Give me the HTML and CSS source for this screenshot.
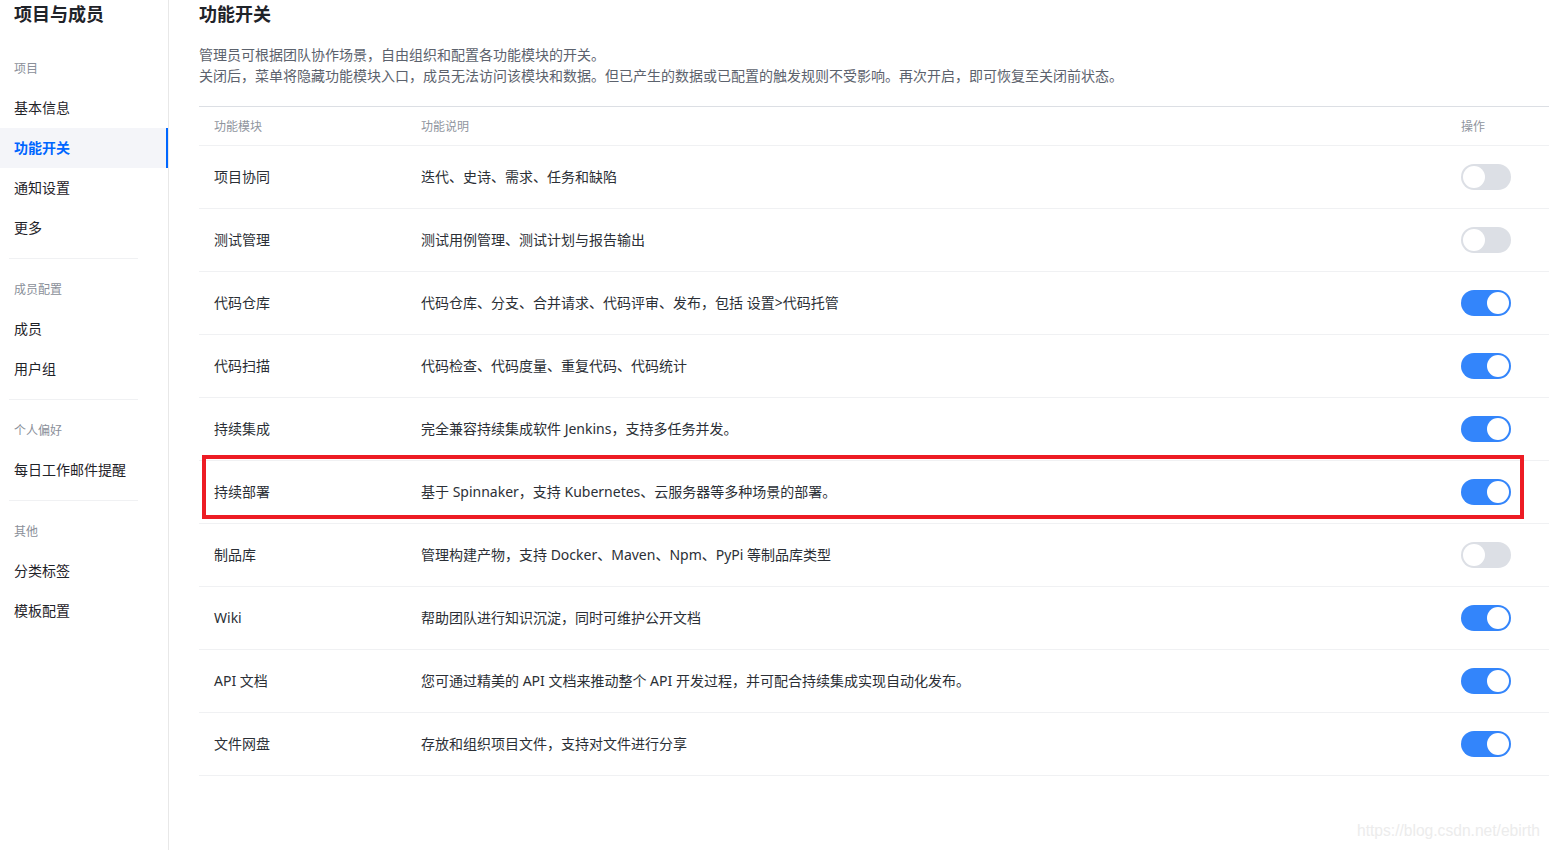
FILE: index.html
```html
<!DOCTYPE html>
<html lang="zh-CN">
<head>
<meta charset="utf-8">
<title>功能开关</title>
<link rel="stylesheet" href="styles.css">
</head>
<body>
<div class="layout">
  <aside class="sidebar">
    <h1 class="side-title">项目与成员</h1>
    <div class="group">
      <div class="group-label">项目</div>
      <a class="nav-item">基本信息</a>
      <a class="nav-item active">功能开关</a>
      <a class="nav-item">通知设置</a>
      <a class="nav-item">更多</a>
    </div>
    <div class="divider"></div>
    <div class="group">
      <div class="group-label">成员配置</div>
      <a class="nav-item">成员</a>
      <a class="nav-item">用户组</a>
    </div>
    <div class="divider"></div>
    <div class="group">
      <div class="group-label">个人偏好</div>
      <a class="nav-item">每日工作邮件提醒</a>
    </div>
    <div class="divider"></div>
    <div class="group">
      <div class="group-label">其他</div>
      <a class="nav-item">分类标签</a>
      <a class="nav-item">模板配置</a>
    </div>
  </aside>

  <main class="main">
    <h2 class="page-title">功能开关</h2>
    <p class="desc">管理员可根据团队协作场景，自由组织和配置各功能模块的开关。<br>关闭后，菜单将隐藏功能模块入口，成员无法访问该模块和数据。但已产生的数据或已配置的触发规则不受影响。再次开启，即可恢复至关闭前状态。</p>

    <div class="table">
      <div class="row head">
        <div class="cell">功能模块</div>
        <div class="cell">功能说明</div>
        <div class="cell">操作</div>
      </div>
      <div class="row">
        <div class="cell">项目协同</div>
        <div class="cell">迭代、史诗、需求、任务和缺陷</div>
        <div class="cell"><span class="switch"></span></div>
      </div>
      <div class="row">
        <div class="cell">测试管理</div>
        <div class="cell">测试用例管理、测试计划与报告输出</div>
        <div class="cell"><span class="switch"></span></div>
      </div>
      <div class="row">
        <div class="cell">代码仓库</div>
        <div class="cell">代码仓库、分支、合并请求、代码评审、发布，包括 设置&gt;代码托管</div>
        <div class="cell"><span class="switch on"></span></div>
      </div>
      <div class="row">
        <div class="cell">代码扫描</div>
        <div class="cell">代码检查、代码度量、重复代码、代码统计</div>
        <div class="cell"><span class="switch on"></span></div>
      </div>
      <div class="row">
        <div class="cell">持续集成</div>
        <div class="cell">完全兼容持续集成软件 Jenkins，支持多任务并发。</div>
        <div class="cell"><span class="switch on"></span></div>
      </div>
      <div class="row">
        <div class="cell">持续部署</div>
        <div class="cell">基于 Spinnaker，支持 Kubernetes、云服务器等多种场景的部署。</div>
        <div class="cell"><span class="switch on"></span></div>
      </div>
      <div class="row">
        <div class="cell">制品库</div>
        <div class="cell">管理构建产物，支持 Docker、Maven、Npm、PyPi 等制品库类型</div>
        <div class="cell"><span class="switch"></span></div>
      </div>
      <div class="row">
        <div class="cell">Wiki</div>
        <div class="cell">帮助团队进行知识沉淀，同时可维护公开文档</div>
        <div class="cell"><span class="switch on"></span></div>
      </div>
      <div class="row">
        <div class="cell">API 文档</div>
        <div class="cell">您可通过精美的 API 文档来推动整个 API 开发过程，并可配合持续集成实现自动化发布。</div>
        <div class="cell"><span class="switch on"></span></div>
      </div>
      <div class="row">
        <div class="cell">文件网盘</div>
        <div class="cell">存放和组织项目文件，支持对文件进行分享</div>
        <div class="cell"><span class="switch on"></span></div>
      </div>
    </div>
  </main>
</div>
<div class="highlight"></div>
<div class="watermark">https://blog.csdn.net/ebirth</div>
</body>
</html>
```

FILE: styles.css
```css
* { box-sizing: border-box; }
html, body {
  margin: 0;
  padding: 0;
  background: #fff;
}
body {
  font-family: "Noto Sans", "Noto Sans CJK SC", sans-serif;
  color: #1f2329;
  width: 1549px;
  height: 850px;
  overflow: hidden;
  position: relative;
}
.layout {
  display: flex;
  height: 850px;
}
.sidebar {
  width: 169px;
  flex: none;
  border-right: 1px solid #e8e8e8;
}
.side-title {
  margin: 0 0 20px 0;
  padding-left: 14px;
  font-size: 18px;
  line-height: 28px;
  font-weight: 700;
  color: #1f2329;
}
.group { display: flex; flex-direction: column; }
.group-label {
  height: 40px;
  line-height: 42px;
  padding-left: 14px;
  font-size: 12px;
  color: #8a8f99;
}
.nav-item {
  display: block;
  height: 40px;
  line-height: 40px;
  padding-left: 14px;
  font-size: 14px;
  color: #1f2329;
}
.nav-item.active {
  background: #f4f5f9;
  color: #0066ff;
  font-weight: 700;
  border-right: 2px solid #0066ff;
}
.divider {
  height: 1px;
  margin: 10px 30px 10px 9px;
  background: #f0f1f3;
}
.main {
  flex: 1;
  padding-left: 30px;
  min-width: 0;
}
.page-title {
  margin: 0;
  font-size: 18px;
  line-height: 28px;
  font-weight: 700;
  color: #1f2329;
}
.desc {
  margin: 16px 0 20px 0;
  font-size: 14px;
  line-height: 21px;
  color: #5c626d;
}
.table {
  border-top: 1px solid #dcdfe4;
}
.row {
  display: grid;
  grid-template-columns: 207px 1fr 103px;
  height: 63px;
  align-items: center;
  border-bottom: 1px solid #f0f1f3;
  font-size: 14px;
  line-height: 20px;
  color: #2b2f36;
}
.row .cell:not(:last-child) { padding-bottom: 1px; }
.row.head {
  height: 39px;
  font-size: 12px;
  color: #8f959e;
}
.row.head .cell { padding-bottom: 0; padding-top: 2px; }
.cell { padding-left: 15px; white-space: nowrap; }
.switch {
  display: block;
  position: relative;
  width: 50px;
  height: 26px;
  border-radius: 13px;
  background: #dcdfe5;
}
.switch::after {
  content: "";
  position: absolute;
  top: 2px;
  left: 2px;
  width: 22px;
  height: 22px;
  border-radius: 50%;
  background: #fff;
}
.switch.on { background: #3385fb; }
.switch.on::after { left: 26px; }
.highlight {
  position: absolute;
  left: 202px;
  top: 455px;
  width: 1322px;
  height: 64px;
  border: 4px solid #ed1c24;
}
.watermark {
  position: absolute;
  left: 1357px;
  top: 822px;
  font-family: "Liberation Sans", Arial, sans-serif;
  font-size: 15.6px;
  color: #ececec;
}
```
